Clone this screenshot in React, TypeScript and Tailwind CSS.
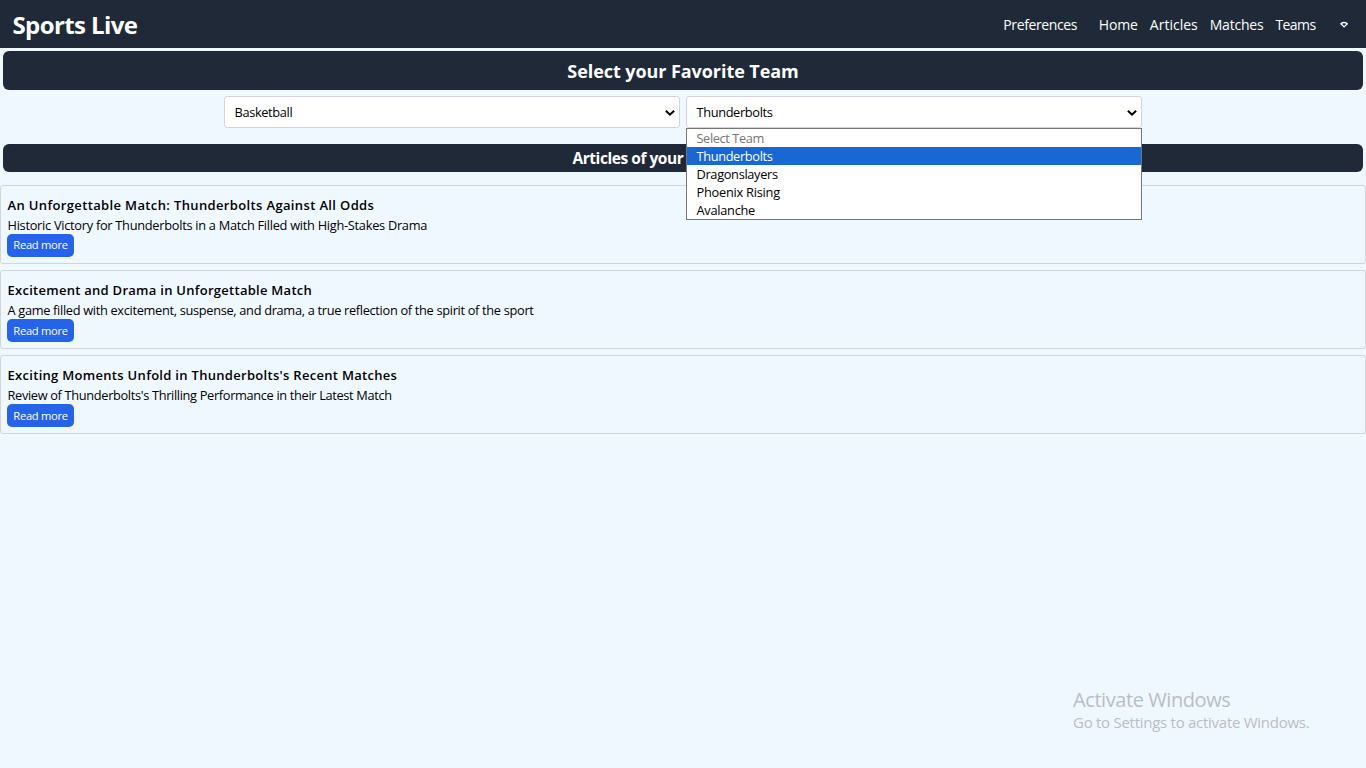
const articles = [
  {
    title: 'An Unforgettable Match: Thunderbolts Against All Odds',
    text: 'Historic Victory for Thunderbolts in a Match Filled with High-Stakes Drama',
    titleClass: 'tracking-[0.36px]',
    textClass: 'tracking-[-0.28px]',
    buttonClass: 'pb-px',
  },
  {
    title: 'Excitement and Drama in Unforgettable Match',
    text: 'A game filled with excitement, suspense, and drama, a true reflection of the spirit of the sport',
    titleClass: 'tracking-[0.27px]',
    textClass: 'tracking-[-0.32px]',
    buttonClass: 'pt-px',
  },
  {
    title: "Exciting Moments Unfold in Thunderbolts's Recent Matches",
    text: "Review of Thunderbolts's Thrilling Performance in their Latest Match",
    titleClass: 'tracking-[0.3px]',
    textClass: 'tracking-[-0.34px]',
    buttonClass: 'pt-px',
  },
];

const teams = [
  { name: 'Select Team', className: 'text-[#757575] tracking-[-0.4px]' },
  { name: 'Thunderbolts', className: 'bg-[#1967d2] text-white tracking-[-0.36px]' },
  { name: 'Dragonslayers', className: 'tracking-[-0.33px]' },
  { name: 'Phoenix Rising', className: 'tracking-[-0.24px]' },
  { name: 'Avalanche', className: 'tracking-[-0.27px]' },
];

function SelectBox({ value }: { value: string }) {
  return (
    <div className="flex h-8 w-[456px] items-center justify-between rounded-[3px] border border-[#d1d5db] bg-white pt-px pr-[4px] pl-[9.5px] tracking-[-0.36px]">
      <span className="pt-px">{value}</span>
      <svg width="10" height="8" viewBox="0 0 10 8" fill="none" stroke="#000" strokeWidth="2">
        <path d="M0.9 1.7 L5 5.6 L9.1 1.7" />
      </svg>
    </div>
  );
}

export default function App() {
  return (
    <div className="relative h-screen overflow-hidden bg-[#f0f8ff] font-['Open_Sans','Noto_Sans',sans-serif] text-[12.8px] text-black">
      <nav className="flex h-12 items-center justify-between bg-[#1f2937] pt-[2px] pr-[17px] pl-[12.5px] text-white">
        <span className="text-[24px] leading-8 font-bold tracking-[-0.6px]">Sports Live</span>
        <div className="flex items-center text-[14px] leading-5">
          <span className="mr-[21.5px] tracking-[-0.37px]">Preferences</span>
          <span className="mr-[12px] tracking-[-0.1px]">Home</span>
          <span className="mr-[12px]">Articles</span>
          <span className="mr-[12px] tracking-[-0.2px]">Matches</span>
          <span className="mr-[24.5px] tracking-[-0.6px]">Teams</span>
          <svg className="mb-[2px]" width="9" height="7" viewBox="0 0 9 7" fill="none" stroke="#fff" strokeWidth="1.3" strokeLinejoin="round">
            <path d="M0.9 2.8 Q4 0.2 7.3 2.8 L4.1 5.9 Z" />
          </svg>
        </div>
      </nav>

      <h2 className="mx-[3px] mt-[3px] flex h-[39px] items-center justify-center rounded-[6px] bg-[#1f2937] pt-[2px] text-[18px] font-bold tracking-[-0.07px] text-white">
        Select your Favorite Team
      </h2>

      <div className="mt-[6px] flex justify-center gap-[6px]">
        <SelectBox value="Basketball" />
        <div className="relative">
          <SelectBox value="Thunderbolts" />
          <ul className="absolute top-full left-0 z-10 w-[456px] border border-[#767676] bg-white">
            {teams.map((t) => (
              <li key={t.name} className={`h-[18px] pl-[9.5px] leading-[18px] ${t.className}`}>
                {t.name}
              </li>
            ))}
          </ul>
        </div>
      </div>

      <h2 className="mx-[3px] mt-[16px] flex h-[28px] items-center justify-center rounded-[6px] bg-[#1f2937] pt-[2px] text-[15.5px] font-bold tracking-[-0.45px] text-white">
        <span className="w-[221px]">Articles of your</span>
      </h2>

      <div className="mt-[13px] flex flex-col gap-[6px]">
        {articles.map((a) => (
          <article key={a.title} className="flex h-[79px] flex-col items-start rounded-[3px] border border-[#d1d5db] pt-[9px] pl-[6px]">
            <h3 className={`h-5 pl-[0.5px] text-[13px] leading-[21px] font-semibold ${a.titleClass}`}>{a.title}</h3>
            <p className={`h-[19px] pl-[0.5px] leading-5 ${a.textClass}`}>{a.text}</p>
            <button className={`h-[23px] w-[67px] rounded-[5px] bg-[#2563eb] text-[11.2px] tracking-[-0.3px] text-white ${a.buttonClass}`}>
              Read more
            </button>
          </article>
        ))}
      </div>

      <div className="absolute top-[686px] left-[1073px] text-[#b9bec3]">
        <p className="h-[27px] text-[20px] leading-7 tracking-[-0.42px]">Activate Windows</p>
        <p className="text-[15px] leading-[18px] tracking-[-0.27px]">Go to Settings to activate Windows.</p>
      </div>
    </div>
  );
}
